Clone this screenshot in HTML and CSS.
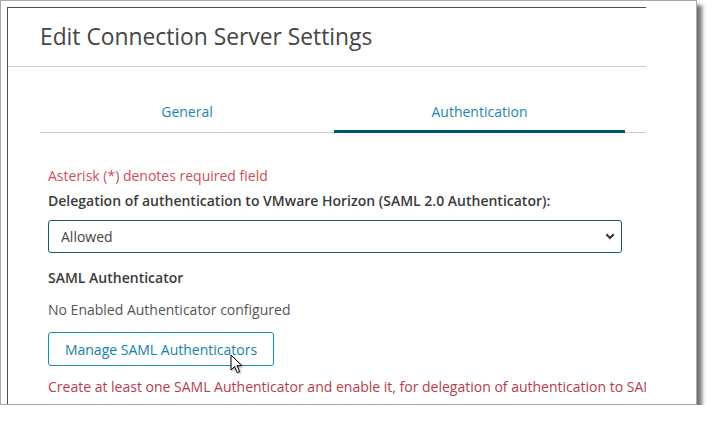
FILE: index.html
```html
<!DOCTYPE html>
<html>
<head>
    <meta charset="UTF-8">
    <title>Edit Connection Server Settings</title>
    <link rel="stylesheet" href="styles.css">
</head>
<body>

    <div class="frame">
        <div class="dialog">
            <div class="dialog-header">
                <h1 class="dialog-title">Edit Connection Server Settings</h1>
            </div>

            <div class="dialog-body">
                <div class="tabs">
                    <div class="tab">General</div>
                    <div class="tab active">Authentication</div>
                </div>

                <div class="form">
                    <div class="required-note">Asterisk (*) denotes required field</div>
                    <div class="field-label">Delegation of authentication to VMware Horizon (SAML 2.0 Authenticator):</div>
                    <div class="select">
                        <span>Allowed</span>
                        <svg class="chevron" width="10" height="7" viewBox="0 0 10 7">
                            <path d="M1.3 1.3 L5 5 L8.7 1.3" fill="none" stroke="#333" stroke-width="2"/>
                        </svg>
                    </div>

                    <div class="section-label">SAML Authenticator</div>
                    <div class="status-text">No Enabled Authenticator configured</div>

                    <div class="button-row">
                        <button class="outline-button">Manage SAML Authenticators</button>
                        <svg class="pointer" width="14" height="21" viewBox="0 0 14 21">
                            <path d="M1 1 L1 16 L4.6 12.6 L7.2 18.6 L9.6 17.6 L7 11.7 L11.8 11.7 Z" fill="#fff" stroke="#000" stroke-width="1" stroke-linejoin="round"/>
                        </svg>
                    </div>

                    <div class="error-text">Create at least one SAML Authenticator and enable it, for delegation of authentication to SAML 2.0 Authenticator.</div>
                </div>
            </div>
        </div>
    </div>

</body>
</html>
```

FILE: styles.css
```css
body {
    margin: 0;
    background-color: #ffffff;
    font-family: "Open Sans", "Liberation Sans", sans-serif;
}
.frame {
    width: 697px;
    height: 405px;
    border: 1px solid #aaaaaa;
    background: #ffffff;
    box-shadow: 5px 5px 4px rgba(0, 0, 0, 0.55);
    padding: 6px 0 0 6px;
    box-sizing: border-box;
    overflow: hidden;
}
.dialog {
    width: 639px;
    height: 398px;
    border-top: 1px solid #4d4d4d;
    border-left: 1px solid #4d4d4d;
    box-sizing: border-box;
    overflow: hidden;
    white-space: nowrap;
}
.dialog-header {
    height: 58px;
    border-bottom: 1px solid #cccccc;
    padding-left: 32px;
    display: flex;
    align-items: center;
}
.dialog-title {
    margin: 0 0 2px;
    font-size: 22.8px;
    font-weight: 400;
    color: #454545;
}
.dialog-body {
    padding: 0 0 0 32px;
}
.tabs {
    display: flex;
    margin-top: 27px;
    border-bottom: 1px solid #cccccc;
    width: 700px;
}
.tab {
    width: 294px;
    text-align: center;
    font-size: 14px;
    color: #1a87b0;
    padding: 8px 0 9px;
    border-bottom: 3px solid transparent;
    margin-bottom: -1px;
}
.tab.active {
    width: 291px;
    border-bottom-color: #00546f;
}
.form {
    padding-left: 8px;
    padding-top: 33px;
}
.required-note {
    font-size: 14px;
    color: #d24d5c;
    line-height: 20px;
}
.field-label {
    margin-top: 5px;
    font-size: 14px;
    font-weight: 600;
    color: #3b3b3b;
    line-height: 20px;
}
.select {
    margin-top: 9px;
    width: 574px;
    height: 33px;
    box-sizing: border-box;
    border: 1px solid #1b5b6e;
    border-radius: 3px;
    display: flex;
    align-items: center;
    justify-content: space-between;
    padding: 0 6px 0 12px;
    font-size: 14px;
    color: #444444;
}
.section-label {
    margin-top: 15px;
    font-size: 14px;
    font-weight: 600;
    color: #3b3b3b;
    line-height: 20px;
}
.status-text {
    margin-top: 12px;
    font-size: 14px;
    color: #555555;
    line-height: 20px;
}
.button-row {
    position: relative;
    margin-top: 12px;
}
.outline-button {
    width: 226px;
    height: 34px;
    border: 1px solid #1b8fb3;
    border-radius: 3px;
    background: #ffffff;
    font-family: "Open Sans", "Liberation Sans", sans-serif;
    font-size: 14px;
    color: #1581aa;
    padding: 0;
}
.pointer {
    position: absolute;
    left: 182px;
    top: 22px;
    filter: drop-shadow(1px 1px 1px rgba(0, 0, 0, 0.35));
}
.error-text {
    margin-top: 11px;
    font-size: 14px;
    color: #b83c4e;
    line-height: 20px;
}
```
